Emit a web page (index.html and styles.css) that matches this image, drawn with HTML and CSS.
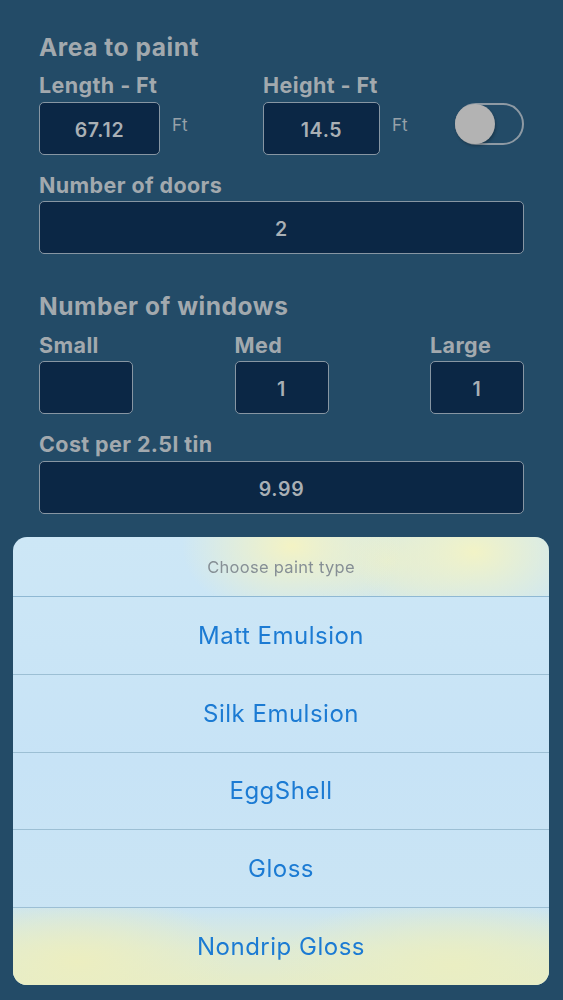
FILE: index.html
```html
<!DOCTYPE html>
<html lang="en">
<head>
  <meta charset="UTF-8">
  <meta name="viewport" content="width=device-width, initial-scale=1.0">
  <title>Paint Calculator</title>
  <link rel="stylesheet" href="styles.css">
</head>
<body>
  <div class="form">
    <h2 class="section-title">Area to paint</h2>
    <div class="area-row">
      <div class="area-col col-length">
        <p class="field-label">Length - Ft</p>
        <div class="unit-field">
          <div class="input input-length">67.12</div>
          <span class="unit">Ft</span>
        </div>
      </div>
      <div class="area-col col-height">
        <p class="field-label">Height - Ft</p>
        <div class="unit-field">
          <div class="input input-height">14.5</div>
          <span class="unit">Ft</span>
        </div>
      </div>
      <div class="toggle"><span class="knob"></span></div>
    </div>

    <p class="field-label label-doors">Number of doors</p>
    <div class="input input-wide">2</div>

    <h2 class="section-title title-windows">Number of windows</h2>
    <div class="windows-row">
      <div class="win-col">
        <p class="field-label">Small</p>
        <div class="input input-small"></div>
      </div>
      <div class="win-col">
        <p class="field-label">Med</p>
        <div class="input input-small">1</div>
      </div>
      <div class="win-col">
        <p class="field-label">Large</p>
        <div class="input input-small">1</div>
      </div>
    </div>

    <p class="field-label label-cost">Cost per 2.5l tin</p>
    <div class="input input-wide">9.99</div>
  </div>

  <div class="action-sheet">
    <div class="sheet-title">Choose paint type</div>
    <div class="sheet-item">Matt Emulsion</div>
    <div class="sheet-item">Silk Emulsion</div>
    <div class="sheet-item">EggShell</div>
    <div class="sheet-item">Gloss</div>
    <div class="sheet-item sheet-item-last">Nondrip Gloss</div>
  </div>
</body>
</html>
```

FILE: styles.css
```css
html, body {
  height: 100%;
}

body {
  margin: 0;
  background-color: #234b67;
  font-family: Inter, "Noto Sans", Arial, sans-serif;
  color: #a2a9ae;
  overflow: hidden;
}

.form {
  padding: 33px 39px 0 39px;
}

.section-title {
  margin: 0;
  font-size: 24.5px;
  line-height: 28px;
  font-weight: 700;
  letter-spacing: 0.55px;
  color: #a2a9ae;
}

.field-label {
  margin: 0;
  font-size: 21.5px;
  line-height: 24px;
  font-weight: 700;
  letter-spacing: 0.4px;
  color: #a2a9ae;
}

.input {
  box-sizing: border-box;
  height: 53px;
  background-color: #0b2745;
  border: 1.5px solid #8796a3;
  border-radius: 5px;
  display: flex;
  align-items: center;
  justify-content: center;
  font-size: 19.5px;
  font-weight: 600;
  letter-spacing: 0.7px;
  color: #a9b0b5;
  padding-top: 2px;
}

/* area row */
.area-row {
  display: flex;
  margin-top: 12px;
}

.area-col .field-label {
  margin-bottom: 5px;
}

.col-length {
  width: 224px;
}

.col-height {
  width: 192px;
}

.unit-field {
  display: flex;
  align-items: flex-start;
}

.input-length {
  width: 121px;
}

.input-height {
  width: 117px;
}

.unit {
  margin-left: 12px;
  margin-top: 13px;
  font-size: 17px;
  color: #97a1a9;
}

.toggle {
  position: relative;
  box-sizing: border-box;
  width: 69px;
  height: 42px;
  margin-top: 30px;
  border: 2px solid #8e9aa4;
  border-radius: 21px;
}

.knob {
  position: absolute;
  left: -2px;
  top: -1px;
  width: 40px;
  height: 40px;
  border-radius: 50%;
  background-color: #b3b3b3;
  box-shadow: 1px 2px 3px rgba(0, 0, 0, 0.25);
}

/* doors */
.label-doors {
  margin-top: 18px;
  margin-bottom: 4px;
}

.input-wide {
  width: 100%;
}

/* windows */
.title-windows {
  margin-top: 38px;
}

.windows-row {
  display: flex;
  justify-content: space-between;
  margin-top: 13px;
}

.win-col .field-label {
  margin-bottom: 4px;
}

.input-small {
  width: 94px;
  height: 53px;
}

.label-cost {
  margin-top: 18px;
  margin-bottom: 5px;
}

/* action sheet overlay */
.action-sheet {
  position: fixed;
  left: 13px;
  right: 14px;
  top: 537px;
  height: 448px;
  border-radius: 14px;
  overflow: hidden;
  display: flex;
  flex-direction: column;
  background-color: #c9e5f7;
  background-image: linear-gradient(180deg, #cde7f6 0%, #c7e3f6 50%, #cbe5f3 100%);
}

.sheet-title {
  height: 60px;
  display: flex;
  align-items: center;
  justify-content: center;
  font-size: 16.5px;
  letter-spacing: 0.3px;
  color: #868f95;
  border-bottom: 1px solid #8fb8d3;
  box-sizing: border-box;
  background-image:
    radial-gradient(ellipse 110px 75px at 52% 15%, rgba(244, 243, 196, 1), rgba(244, 243, 196, 0)),
    radial-gradient(ellipse 120px 80px at 86% 25%, rgba(242, 243, 198, 1), rgba(242, 243, 198, 0)),
    radial-gradient(ellipse 90px 60px at 70% 40%, rgba(232, 238, 205, 0.8), rgba(232, 238, 205, 0));
}

.sheet-item {
  flex: 1;
  display: flex;
  align-items: center;
  justify-content: center;
  font-size: 24px;
  letter-spacing: 0.5px;
  color: #1c7bd3;
  border-bottom: 1px solid #9cbfd4;
}

.sheet-item-last {
  border-bottom: none;
  background-image:
    radial-gradient(ellipse 160px 70px at 12% 70%, rgba(236, 238, 192, 1), rgba(236, 238, 192, 0)),
    radial-gradient(ellipse 180px 70px at 82% 75%, rgba(234, 238, 194, 1), rgba(234, 238, 194, 0)),
    linear-gradient(180deg, rgba(220, 234, 215, 0) 0%, rgba(226, 236, 208, 0.85) 55%, rgba(230, 236, 200, 1) 100%);
}
```
